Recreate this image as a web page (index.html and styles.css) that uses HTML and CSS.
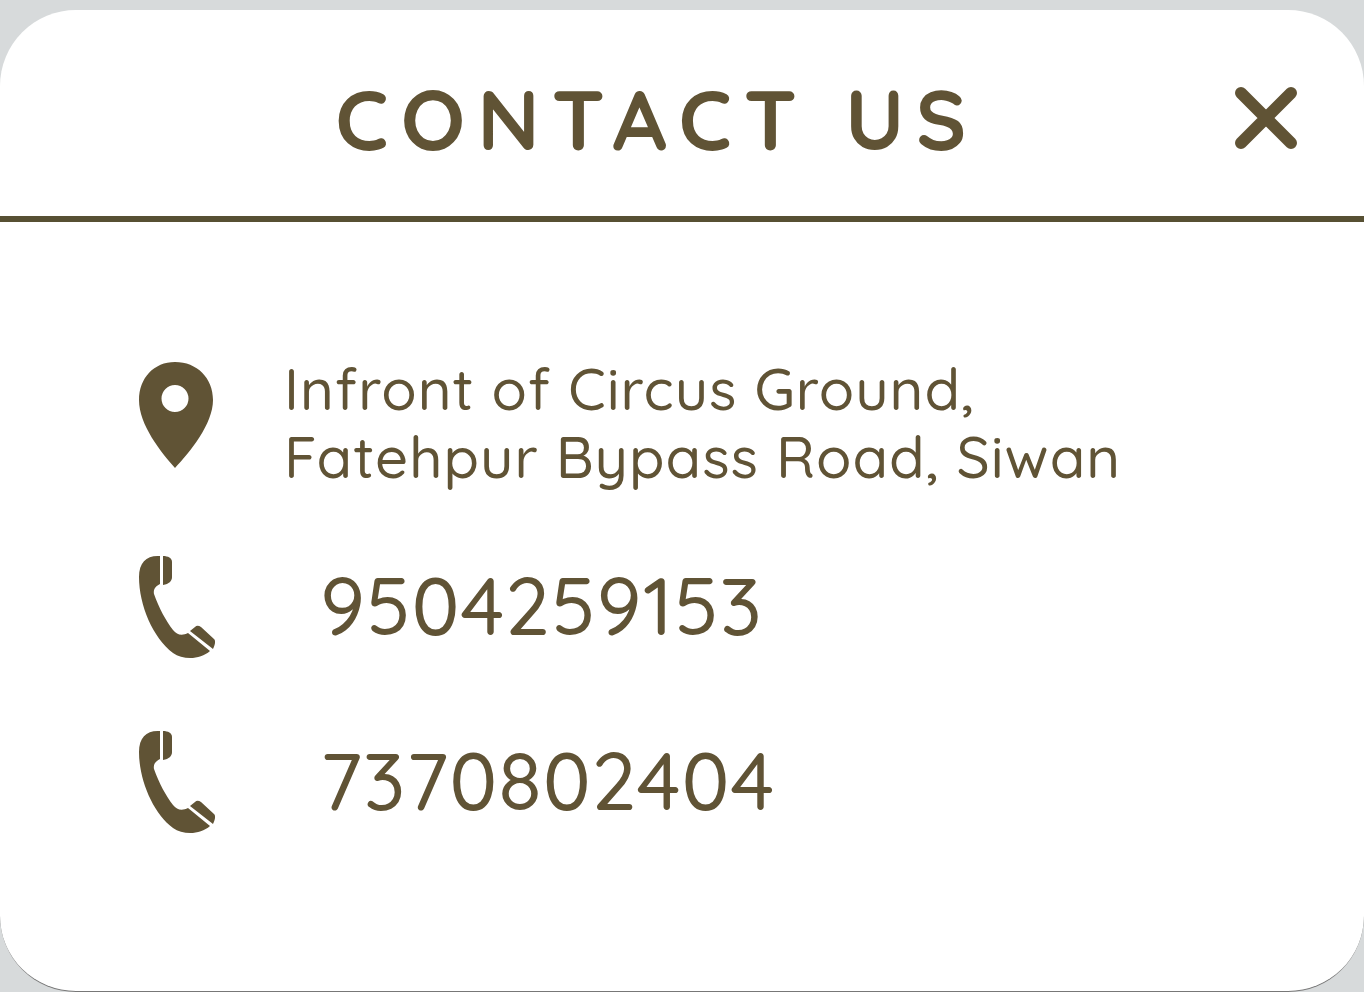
FILE: index.html
```html
<!DOCTYPE html>
<html lang="en">
<head>
<meta charset="utf-8">
<meta name="viewport" content="width=device-width, initial-scale=1">
<title>Contact us</title>
<link rel="stylesheet" href="styles.css">
</head>
<body>
<main class="card">
  <header class="card-header">
    <h1 class="title">CONTACT US</h1>
    <button class="close" type="button" aria-label="Close">
      <svg class="close-icon" viewBox="0 0 62 62" aria-hidden="true"><path d="M6 6 56 56M56 6 6 56" fill="none" stroke="currentColor" stroke-width="12" stroke-linecap="round"/></svg>
    </button>
  </header>
  <address class="details">
    <div class="row place">
      <svg class="pin" viewBox="0 0 76 108" aria-hidden="true"><path fill="currentColor" fill-rule="evenodd" d="M37 1C16 1 1 17 1 39c0 25 22 52 36 68 15-16 38-44 38-68C75 17 59 1 37 1Zm0 23a13.500 13.500 0 1 1 0 27 13.500 13.500 0 0 1 0-27Z"/></svg>
      <p class="street">Infront of Circus Ground,<br>Fatehpur Bypass Road, Siwan</p>
    </div>
    <div class="row">
      <svg class="handset" viewBox="0 0 78 104" aria-hidden="true"><g fill="currentColor"><path d="M22 1v28c-4 2-7 5-6 10 5 14 12 27 19 36 4 5 9 6 15 3l22 18c-10 9-27 9-37 2C15 83 1 50 1 22 1 7 9 0 22 1Z"/><path d="M25 1c5 0 9 2 9 6v15c0 4-3 7-9 8Z"/><path d="M52 76l5-4c2-2 4-1 6 0l13 12c2 2 1 6-1 10Z"/></g></svg>
      <a class="phone" href="tel:9504259153">9504259153</a>
    </div>
    <div class="row">
      <svg class="handset" viewBox="0 0 78 104" aria-hidden="true"><g fill="currentColor"><path d="M22 1v28c-4 2-7 5-6 10 5 14 12 27 19 36 4 5 9 6 15 3l22 18c-10 9-27 9-37 2C15 83 1 50 1 22 1 7 9 0 22 1Z"/><path d="M25 1c5 0 9 2 9 6v15c0 4-3 7-9 8Z"/><path d="M52 76l5-4c2-2 4-1 6 0l13 12c2 2 1 6-1 10Z"/></g></svg>
      <a class="phone" href="tel:7370802404">7370802404</a>
    </div>
  </address>
</main>
</body>
</html>
```
FILE: styles.css
```css
* { box-sizing: border-box; }
body {
  display: flex;
  min-height: 100vh;
  margin: 0;
  padding-top: 10px;
  background: #d7dadb;
  color: #605335;
  font-family: Quicksand, Lato, sans-serif;
}
.card {
  flex: 1;
  background: #fff;
  border-bottom: 1px solid #777;
  border-radius: 76px;
}
.card-header {
  display: grid;
  grid-template-columns: 1fr auto 1fr;
  align-items: center;
  padding: 65px 67px 55px 17px;
  border-bottom: 6px solid #575033;
}
.title {
  grid-column: 2;
  margin: 0;
  font-size: 85px;
  line-height: 86px;
  font-weight: 700;
  letter-spacing: 12px;
}
.close {
  justify-self: end;
  padding: 0;
  border: 0;
  background: none;
  color: inherit;
  cursor: pointer;
}
.close-icon { display: block; width: 62px; }
.details {
  display: flex;
  flex-direction: column;
  gap: 55px;
  padding: 132px 138px 100px;
  font-style: normal;
}
.row {
  display: flex;
  align-items: center;
  gap: 104px;
  min-height: 120px;
}
.place { gap: 70px; min-height: 138px; }
.pin { width: 76px; height: 108px; flex: none; margin-bottom: 16px; }
.handset { width: 78px; height: 104px; flex: none; }
.street {
  margin: 0;
  font-size: 58px;
  line-height: 68px;
  font-weight: 500;
  letter-spacing: 1px;
}
.phone {
  margin-bottom: 4px;
  color: inherit;
  font-size: 80px;
  line-height: 96px;
  font-weight: 500;
  letter-spacing: 1px;
  text-decoration: none;
}
```
